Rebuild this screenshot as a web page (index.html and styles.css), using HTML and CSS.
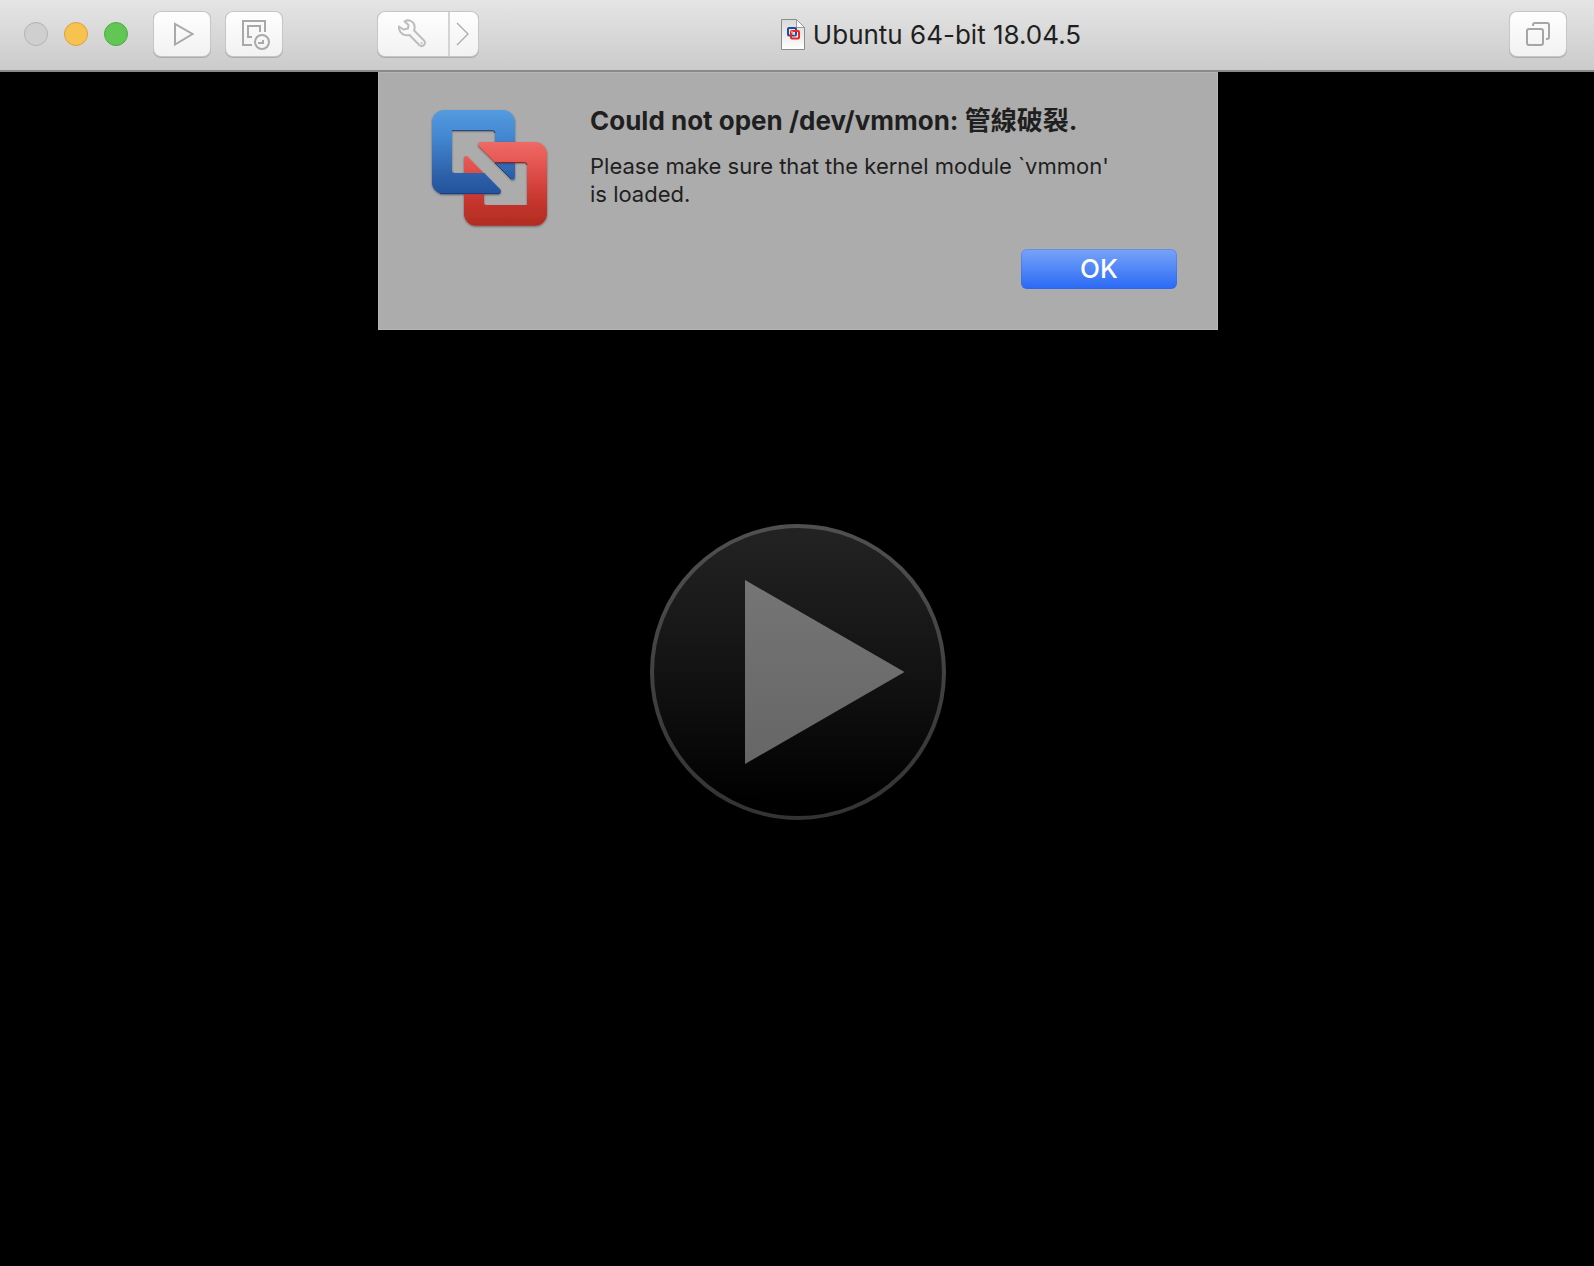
FILE: index.html
```html
<!DOCTYPE html>
<html lang="en">
<head>
  <meta charset="utf-8">
  <title>Ubuntu 64-bit 18.04.5</title>
  <link rel="stylesheet" href="styles.css">
</head>
<body>
  <header class="titlebar">
    <div class="lights">
      <button class="light light-close" aria-label="Close" disabled></button>
      <button class="light light-minimize" aria-label="Minimize"></button>
      <button class="light light-zoom" aria-label="Zoom"></button>
    </div>
    <div class="tools">
      <button class="tool" aria-label="Start">
        <svg width="56" height="44" viewBox="0 0 56 44"><path d="M21 12v20.500L38.500 22z" fill="none" stroke="#a9a9a9" stroke-width="2"/></svg>
      </button>
      <button class="tool" aria-label="Snapshots">
        <svg width="56" height="44" viewBox="0 0 56 44" fill="none" stroke="#a9a9a9" stroke-width="2">
          <path d="M39 20V9H17v24h9M34 20v-6H22v11h4"/>
          <circle cx="36" cy="30" r="7"/>
          <path d="M37 28v3h-5"/>
        </svg>
      </button>
    </div>
    <div class="tool-group">
      <button class="segment segment-wide" aria-label="Settings">
        <svg width="70" height="44" viewBox="0 0 70 44">
          <path d="M26.500 9.500c4-2.500 9-.5 10 4 .4 1.800.1 3.500-.4 5L46 28.500c3 3.200-1.600 7.500-4.800 4.500L31.500 23c-5 1.300-10-1.500-10.500-7v-1.500l4.500 3 4.500-1 .5-3.500z" fill="none" stroke="#bdbdbd" stroke-width="2" stroke-linejoin="round"/>
          <circle cx="43.500" cy="31" r="1" fill="#bdbdbd"/>
        </svg>
      </button>
      <button class="segment" aria-label="Show more">
        <svg width="28" height="44" viewBox="0 0 28 44"><path d="M7 11l11 11L7 33" fill="none" stroke="#ababab" stroke-width="1.300"/></svg>
      </button>
    </div>
    <h1 class="title">
      <svg width="24" height="32" viewBox="0 0 24 32" aria-hidden="true">
        <defs><linearGradient id="page" x2="0" y2="1"><stop stop-color="#d9d9d9"/><stop offset="1" stop-color="#fff"/></linearGradient></defs>
        <path d="M.5.500h15l8 8v22H.5z" fill="url(#page)" stroke="#8c8c8c"/>
        <path d="M15.500.500v8h8z" fill="#fff" stroke="#999"/>
        <rect x="7" y="9" width="8" height="7.500" rx="1" fill="none" stroke="#24489b" stroke-width="2"/>
        <rect x="10" y="12" width="8" height="7.500" rx="1" fill="none" stroke="#e8291c" stroke-width="2"/>
        <path d="M10 13h2" stroke="#e88" stroke-width="2"/>
        <path d="M11 14l3 2" stroke="#b9c4e0" stroke-width="1.500"/>
      </svg>
      <span>Ubuntu 64-bit 18.04.5</span>
    </h1>
    <button class="tool" aria-label="Full screen">
      <svg width="56" height="44" viewBox="0 0 56 44" fill="none" stroke="#a6a6a6" stroke-width="2">
        <rect x="17" y="17" width="16" height="16" rx="2"/>
        <path d="M23 14v-1a2 2 0 0 1 2-2h12a2 2 0 0 1 2 2v12a2 2 0 0 1-2 2h-1"/>
      </svg>
    </button>
  </header>

  <main class="stage">
    <section class="sheet" role="alertdialog" aria-labelledby="sheet-title" aria-describedby="sheet-text">
      <svg class="sheet-logo" width="120" height="122" viewBox="180 144 360 366" aria-hidden="true">
        <defs>
          <linearGradient id="blue" gradientUnits="userSpaceOnUse" x1="0" y1="150" x2="0" y2="402"><stop stop-color="#549bde"/><stop offset=".3" stop-color="#4488d3"/><stop offset=".75" stop-color="#2e62ab"/><stop offset="1" stop-color="#24529c"/></linearGradient>
          <linearGradient id="red" gradientUnits="userSpaceOnUse" x1="0" y1="246" x2="0" y2="497"><stop stop-color="#ee6a65"/><stop offset=".3" stop-color="#e3524d"/><stop offset=".7" stop-color="#c6352e"/><stop offset="1" stop-color="#b02d21"/></linearGradient>
          <clipPath id="lower"><path d="M180 336h220v80H180z"/></clipPath>
          <path id="blue-shape" d="M222 150H399A36 36 0 0 1 435 186V352Q434 363 424 358L375 308V218Q375 211 368 211H246V331Q246 339 254 339H342L390 388Q396 396 388 402H222A36 36 0 0 1 186 366V186A36 36 0 0 1 222 150Z"/>
          <path id="red-shape" d="M332 246H495A36 36 0 0 1 531 282V461A36 36 0 0 1 495 497H318A36 36 0 0 1 282 461V295Q284 284 294 291L342 340V428Q342 435 350 435H471V314Q471 307 464 307H375L326 259Q321 248 332 246Z"/>
          <filter id="drop" x="-10%" y="-10%" width="120%" height="125%"><feDropShadow dx="0" dy="3" stdDeviation="3" flood-color="#000" flood-opacity=".4"/></filter>
        </defs>
        <use href="#blue-shape" fill="url(#blue)" filter="url(#drop)"/>
        <use href="#red-shape" fill="url(#red)" filter="url(#drop)"/>
        <use href="#blue-shape" fill="url(#blue)" clip-path="url(#lower)"/>
        <path d="M246 212H368Q375 212 375 219" fill="none" stroke="#1c3d70" stroke-width="3"/>
        <path d="M375 308H464Q471 308 471 315" fill="none" stroke="#7d1f1a" stroke-width="3"/>
        <path d="M325 258L375 308" stroke="#9b3733" stroke-width="2"/>
        <path d="M375 309L424 358M210 401H388" stroke="#193e78" stroke-width="3"/>
      </svg>
      <div class="sheet-body">
        <h2 class="sheet-title" id="sheet-title">Could not open /dev/vmmon: <span lang="zh-TW">管線破裂</span>.</h2>
        <p class="sheet-text" id="sheet-text">Please make sure that the kernel module `vmmon' is loaded.</p>
        <button class="ok">OK</button>
      </div>
    </section>

    <button class="play" aria-label="Start up the virtual machine">
      <svg width="296" height="296" viewBox="0 0 296 296">
        <defs>
          <linearGradient id="disc" x2="0" y2="1"><stop stop-color="#232323"/><stop offset=".55" stop-color="#111"/><stop offset=".95" stop-color="#000"/></linearGradient>
          <linearGradient id="ring" x2="0" y2="1"><stop stop-color="#505050"/><stop offset="1" stop-color="#333"/></linearGradient>
          <linearGradient id="arrow" x2="0" y2="1"><stop stop-color="#757575"/><stop offset="1" stop-color="#666"/></linearGradient>
        </defs>
        <circle cx="148" cy="148" r="146" fill="url(#disc)" stroke="url(#ring)" stroke-width="4"/>
        <path d="M95 56L254.500 148L95 240Z" fill="url(#arrow)"/>
      </svg>
    </button>
  </main>
</body>
</html>
```
FILE: styles.css
```css
* {
  box-sizing: border-box;
}

body {
  display: flex;
  flex-direction: column;
  min-height: 100vh;
  margin: 0;
  background: #000;
  color: #1f1f1f;
  font-family: Inter, "Noto Sans CJK TC", sans-serif;
}

button {
  padding: 0;
  border: 0;
  font: inherit;
}

svg {
  display: block;
  flex: none;
}

/* Title bar */
.titlebar {
  display: flex;
  align-items: flex-start;
  height: 72px;
  padding: 12px 28px 0 24px;
  border-bottom: 2px solid #8a8a8a;
  background: linear-gradient(#e5e5e5, #cbcbcb);
}

.lights {
  display: flex;
  align-items: center;
  gap: 16px;
  height: 44px;
  margin-right: 26px;
}

.light {
  width: 24px;
  height: 24px;
  border: 1px solid #b2b2b2;
  border-radius: 50%;
  background: #cfcfcf;
}

.light-minimize {
  border-color: #dca03c;
  background: #f6c350;
}

.light-zoom {
  border-color: #4dab40;
  background: #62c655;
}

.tools {
  display: flex;
  gap: 16px;
  margin-right: 96px;
}

.tool,
.tool-group {
  border-radius: 7px;
  background: linear-gradient(#fefefe, #f2f2f2);
  box-shadow: 0 0 0 1px #c6c6c6, 0 1px 0 1px #ababab;
}

.tool {
  width: 56px;
  height: 44px;
}

.tool-group {
  display: flex;
  height: 44px;
}

.segment {
  background: none;
}

.segment-wide {
  border-right: 2px solid #d4d4d4;
}

.title {
  display: flex;
  flex: 1;
  align-items: center;
  justify-content: center;
  gap: 8px;
  height: 46px;
  margin: 0;
  padding-right: 126px;
  font-size: 26px;
  font-weight: 400;
  line-height: 32px;
}

/* Virtual machine display */
.stage {
  position: relative;
  display: flex;
  flex: 1;
  align-items: center;
  justify-content: center;
  margin-left: 2px;
  padding-top: 6px;
}

.play {
  border-radius: 50%;
  background: none;
}

/* Alert sheet, hanging from the title bar */
.sheet {
  position: absolute;
  top: 0;
  left: 50%;
  display: flex;
  gap: 40px;
  width: 840px;
  max-width: 100%;
  padding: 33px 41px 41px 52px;
  transform: translateX(-50%);
  background: #acacac;
  box-shadow: inset 0 0 0 1px #b6b6b6;
}

.sheet-logo {
  margin-top: 3px;
}

.sheet-body {
  display: flex;
  flex: 1;
  flex-direction: column;
}

.sheet-title {
  margin: 0 0 15px;
  font-size: 26px;
  font-weight: 700;
  line-height: 32px;
}

.sheet-text {
  max-width: 540px;
  margin: 0;
  font-size: 22px;
  line-height: 28px;
}

.ok {
  align-self: flex-end;
  width: 156px;
  height: 40px;
  margin-top: 41px;
  padding-bottom: 2px;
  border-radius: 6px;
  background: linear-gradient(#78a4f7, #2a69f6);
  box-shadow: inset 0 0 0 1px rgba(50, 100, 220, .3);
  color: #fff;
  font-size: 26px;
  font-weight: 500;
}
```
